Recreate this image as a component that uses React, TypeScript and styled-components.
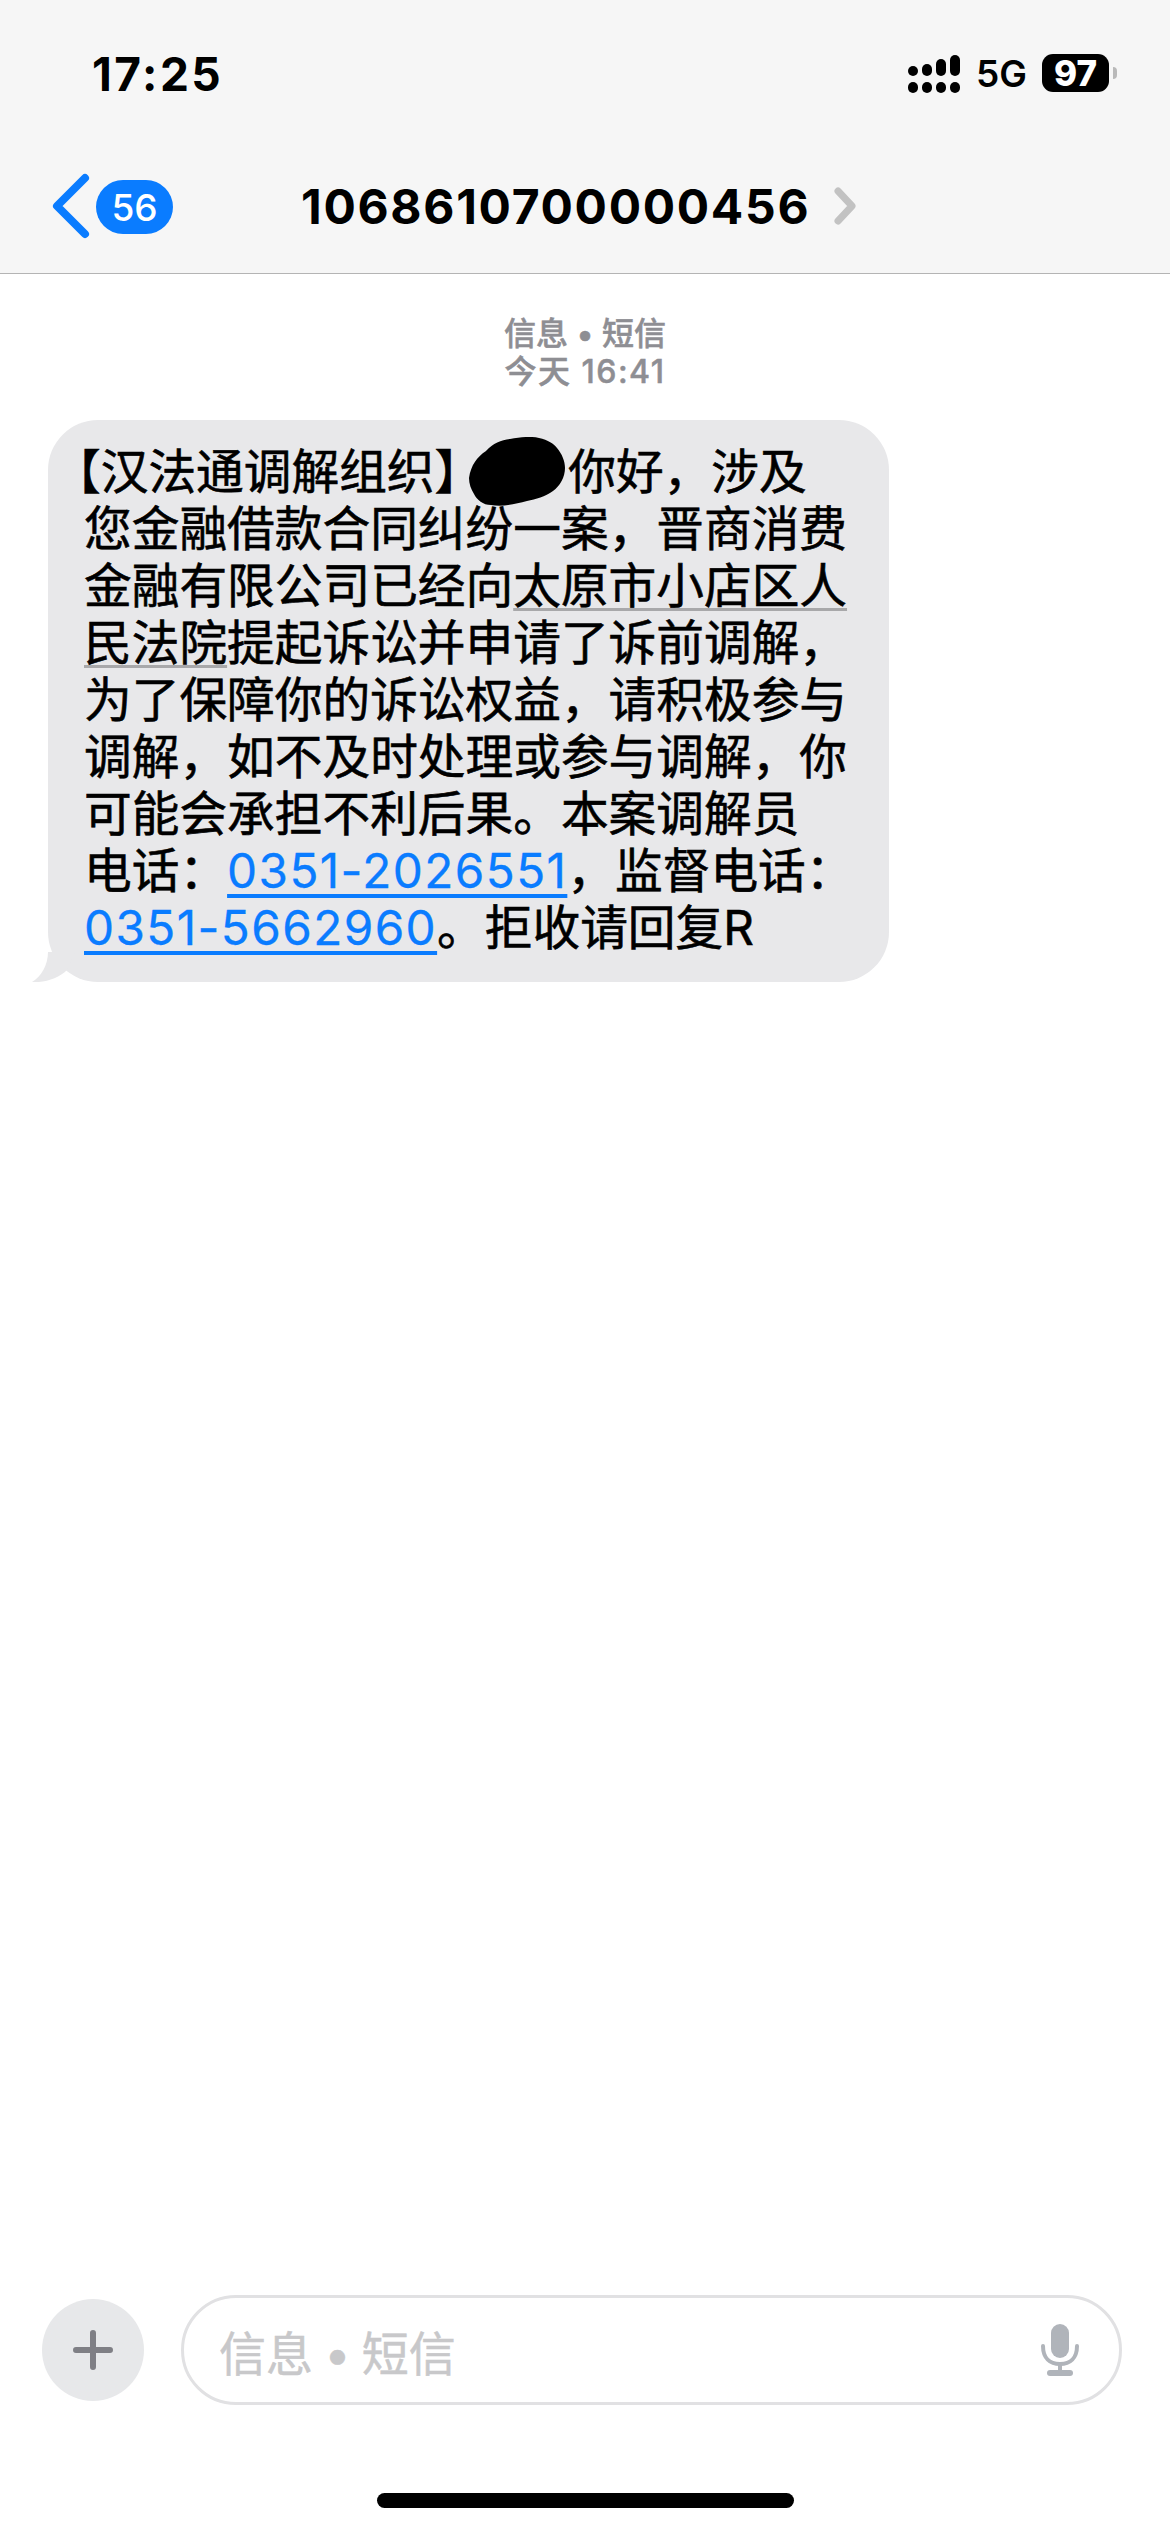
import styled, { createGlobalStyle } from "styled-components";

const GlobalStyle = createGlobalStyle`
    html, body {
        margin: 0;
        padding: 0;
        background: #ffffff;
    }
    body {
        font-family: Inter, "Noto Sans CJK SC", sans-serif;
    }
`;

const Page = styled.div`
    width: 1170px;
    height: 2532px;
    display: flex;
    flex-direction: column;
    overflow: hidden;
    background: #ffffff;
`;

const Header = styled.header`
    height: 273px;
    flex: none;
    background: #f6f6f6;
    border-bottom: 1px solid #b4b4b4;
`;

const StatusBar = styled.div`
    height: 146px;
    box-sizing: border-box;
    padding: 49px 53px 0 92px;
    display: flex;
    justify-content: space-between;
    align-items: flex-start;
`;

const Clock = styled.div`
    font-size: 46px;
    line-height: 50px;
    font-weight: 700;
    letter-spacing: 2.5px;
    color: #000000;
`;

const StatusIcons = styled.div`
    display: flex;
    align-items: center;
    height: 50px;
    margin-top: -1px;
`;

const NetworkLabel = styled.span`
    font-size: 37px;
    font-weight: 600;
    color: #000000;
    margin: 0 15px 0 16px;
`;

const Battery = styled.div`
    width: 67px;
    height: 38px;
    border-radius: 11px;
    background: #000000;
    color: #ffffff;
    font-size: 35px;
    font-weight: 800;
    display: flex;
    align-items: center;
    justify-content: center;
`;

const BatteryNub = styled.div`
    width: 4px;
    height: 12px;
    margin-left: 4px;
    border-radius: 0 4px 4px 0;
    background: #b9b9b9;
`;

const NavBar = styled.nav`
    height: 126px;
    box-sizing: border-box;
    padding: 27px 0 0 52px;
    display: flex;
    align-items: flex-start;
`;

const BackBadge = styled.div`
    width: 77px;
    height: 54px;
    margin: 7px 0 0 6px;
    border-radius: 27px;
    background: #0a7cff;
    color: #ffffff;
    font-size: 37px;
    font-weight: 500;
    display: flex;
    align-items: center;
    justify-content: center;
`;

const Title = styled.h1`
    margin: 6px 0 0 128px;
    font-size: 48px;
    line-height: 56px;
    font-weight: 700;
    letter-spacing: 1.7px;
    color: #000000;
`;

const TitleChevron = styled.svg`
    margin: 14px 0 0 24px;
`;

const Thread = styled.main`
    flex: 1;
    padding-top: 41px;
`;

const Timestamp = styled.div`
    text-align: center;
    font-size: 32px;
    line-height: 38px;
    font-weight: 500;
    color: #8e8e93;
    -webkit-text-stroke: 0.5px #8e8e93;
`;

const TimestampTime = styled.span`
    letter-spacing: 1.5px;
`;

const Bubble = styled.div`
    position: relative;
    width: 841px;
    height: 562px;
    box-sizing: border-box;
    margin: 29px 0 0 48px;
    padding: 24px 0 0 36px;
    border-radius: 50px;
    background: #e8e8ea;
    color: #000000;
    font-size: 47.7px;
    line-height: 57px;
    white-space: nowrap;
    -webkit-text-stroke: 0.6px #000000;
`;

const BubbleTail = styled.svg`
    position: absolute;
    left: -18px;
    bottom: 0;
`;

const OpenBracket = styled.span`
    margin-left: -31px;
`;

const BlotSlot = styled.span`
    position: relative;
    display: inline-block;
    width: 86px;
    height: 0;
`;

const Blot = styled.svg`
    position: absolute;
    left: -13px;
    top: -52px;
`;

const Address = styled.span`
    text-decoration: underline;
    text-decoration-color: #a8a8aa;
    text-decoration-thickness: 3px;
    text-underline-offset: 5px;
`;

const PhoneLink = styled.a`
    color: #0a7cff;
    letter-spacing: 1.4px;
    -webkit-text-stroke: 0.3px #0a7cff;
    text-decoration: underline;
    text-decoration-thickness: 4px;
    text-underline-offset: 6px;
`;

const Composer = styled.div`
    flex: none;
    display: flex;
    align-items: center;
    gap: 37px;
    padding: 0 48px 0 42px;
`;

const PlusButton = styled.div`
    width: 102px;
    height: 102px;
    flex: none;
    border-radius: 50%;
    background: #e7e8ea;
    display: flex;
    align-items: center;
    justify-content: center;
`;

const InputField = styled.div`
    flex: 1;
    height: 110px;
    box-sizing: border-box;
    padding: 0 40px 0 35px;
    border: 3px solid #e1e1e3;
    border-radius: 55px;
    display: flex;
    align-items: center;
    justify-content: space-between;
`;

const Placeholder = styled.span`
    font-size: 47px;
    word-spacing: -2px;
    color: #c8c8ca;
    -webkit-text-stroke: 0.5px #c8c8ca;
`;

const HomeBar = styled.div`
    flex: none;
    width: 417px;
    height: 15px;
    margin: 88px auto 24px;
    border-radius: 8px;
    background: #000000;
`;

function SignalIcon() {
    const columns = [
        { x: 0, top: 13 },
        { x: 14, top: 11 },
        { x: 28, top: 6 },
        { x: 42, top: 2 },
    ];
    return (
        <svg width="52" height="40" viewBox="0 0 52 40">
            {columns.map((col) => (
                <g key={col.x} fill="#000">
                    <rect x={col.x} y={col.top} width="10" height={23 - col.top} rx="5" />
                    <rect x={col.x} y="29" width="10" height="11" rx="5" />
                </g>
            ))}
        </svg>
    );
}

export default function App() {
    return (
        <Page>
            <GlobalStyle />
            <Header>
                <StatusBar>
                    <Clock>17:25</Clock>
                    <StatusIcons>
                        <SignalIcon />
                        <NetworkLabel>5G</NetworkLabel>
                        <Battery>97</Battery>
                        <BatteryNub />
                    </StatusIcons>
                </StatusBar>
                <NavBar>
                    <svg width="38" height="66" viewBox="0 0 38 66">
                        <path
                            d="M33 5 L5 33 L33 61"
                            fill="none"
                            stroke="#0a7cff"
                            strokeWidth="8"
                            strokeLinecap="round"
                            strokeLinejoin="round"
                        />
                    </svg>
                    <BackBadge>56</BackBadge>
                    <Title>1068610700000456</Title>
                    <TitleChevron width="22" height="38" viewBox="0 0 22 38">
                        <path
                            d="M4 4 L18 19 L4 34"
                            fill="none"
                            stroke="#c2c2c2"
                            strokeWidth="7"
                            strokeLinecap="round"
                            strokeLinejoin="round"
                        />
                    </TitleChevron>
                </NavBar>
            </Header>
            <Thread>
                <Timestamp>
                    信息 • 短信
                    <br />
                    <TimestampTime>今天 16:41</TimestampTime>
                </Timestamp>
                <Bubble>
                    <BubbleTail width="50" height="30" viewBox="0 0 50 30">
                        <path d="M18 0 C18 13 11 25 2 30 C15 31 29 26 37 18 L45 0 Z" fill="#e8e8ea" />
                    </BubbleTail>
                    <OpenBracket>【</OpenBracket>汉法通调解组织】
                    <BlotSlot>
                        <Blot width="98" height="70" viewBox="0 0 98 70">
                            <path
                                d="M0 41 C2 28 8 20 17 14 C24 6 32 3 41 2 C52 0 62 -1 70 1 C79 3 85 7 88 11 C93 17 96 24 96 31 C96 40 91 49 84 54 C76 60 67 62 58 64 C46 67 34 70 22 68 C14 68 8 63 5 57 C2 52 0 47 0 41 Z"
                                fill="#000"
                            />
                        </Blot>
                    </BlotSlot>
                    你好，涉及
                    <br />
                    您金融借款合同纠纷一案，晋商消费
                    <br />
                    金融有限公司已经向<Address>太原市小店区人</Address>
                    <br />
                    <Address>民法院</Address>提起诉讼并申请了诉前调解，
                    <br />
                    为了保障你的诉讼权益，请积极参与
                    <br />
                    调解，如不及时处理或参与调解，你
                    <br />
                    可能会承担不利后果。本案调解员
                    <br />
                    电话：<PhoneLink>0351-2026551</PhoneLink>，监督电话：
                    <br />
                    <PhoneLink>0351-5662960</PhoneLink>。拒收请回复R
                </Bubble>
            </Thread>
            <Composer>
                <PlusButton>
                    <svg width="40" height="40" viewBox="0 0 40 40">
                        <path d="M20 3 V37 M3 20 H37" stroke="#7f7f85" strokeWidth="6" strokeLinecap="round" />
                    </svg>
                </PlusButton>
                <InputField>
                    <Placeholder>信息 • 短信</Placeholder>
                    <svg width="38" height="52" viewBox="0 0 38 52">
                        <rect x="10" y="0" width="18" height="34" rx="9" fill="#b0b4ba" />
                        <path d="M2 22 C2 34 9 40 19 40 C29 40 36 34 36 22" fill="none" stroke="#b0b4ba" strokeWidth="4" strokeLinecap="round" />
                        <path d="M19 40 V48" stroke="#b0b4ba" strokeWidth="4" />
                        <rect x="6" y="46" width="26" height="6" rx="3" fill="#b0b4ba" />
                    </svg>
                </InputField>
            </Composer>
            <HomeBar />
        </Page>
    );
}
